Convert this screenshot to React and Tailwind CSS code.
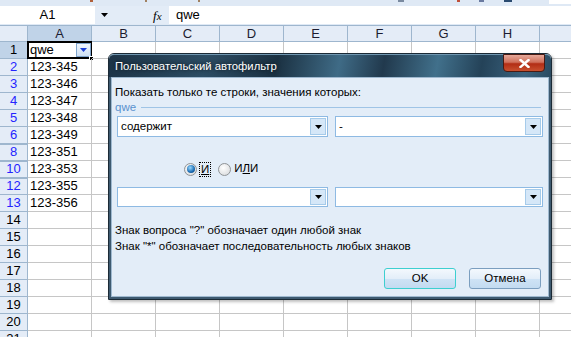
import React from 'react';

const COLS = ['A', 'B', 'C', 'D', 'E', 'F', 'G', 'H', 'I'];

const ROWS = [
    { n: 1, v: 'qwe' },
    { n: 2, v: '123-345', f: true },
    { n: 3, v: '123-346', f: true },
    { n: 4, v: '123-347', f: true },
    { n: 5, v: '123-348', f: true },
    { n: 6, v: '123-349', f: true },
    { n: 8, v: '123-351', f: true, gap: true },
    { n: 10, v: '123-353', f: true, gap: true },
    { n: 12, v: '123-355', f: true, gap: true },
    { n: 13, v: '123-356', f: true },
    { n: 14 }, { n: 15 }, { n: 16 }, { n: 17 }, { n: 18 }, { n: 19 }, { n: 20 }, { n: 21 },
];

const Arrow = ({ color = '#000' }) => (
    <svg width="7" height="4" viewBox="0 0 7 4">
        <path d="M0 0h7L3.5 4z" fill={color} />
    </svg>
);

const ComboBox = ({ value, width }) => (
    <div className={`${width} h-full bg-white border border-[#8ebae3] flex items-stretch`}>
        <span className="flex-1 pl-[3px] text-[11.5px] leading-[19px] text-black">{value}</span>
        <div className="w-[16px] m-[1px] bg-[#d5e7f8] border border-[#a6cbea] flex items-center justify-center">
            <Arrow />
        </div>
    </div>
);

const Radio = ({ checked }) => (
    <div className="w-[13px] h-[13px] rounded-full border border-[#8f9396] bg-[radial-gradient(circle_at_40%_35%,#ffffff,#d3d5d8)] flex items-center justify-center">
        {checked && (
            <div className="w-[8px] h-[8px] rounded-full bg-[radial-gradient(circle_at_40%_35%,#9adaff,#1a6bb3_60%,#0d3f6e)]" />
        )}
    </div>
);

const DlgButton = ({ children, focused }) => (
    <div className={`w-[72px] h-[21px] rounded-[3px] border ${focused ? 'border-[#3dcfd0]' : 'border-[#7b9ebf]'} bg-[linear-gradient(#f3f8fd_0%,#e3eef9_50%,#cfe3f5_51%,#c3dbf1_100%)] flex items-center justify-center text-[11.5px] text-black`}>
        {children}
    </div>
);

const App = () => {
    return (
        <div className="relative w-[571px] h-[337px] overflow-hidden bg-white font-['Liberation_Sans',Arial,sans-serif] text-black select-none">
            {/* верхняя полоска ленты */}
            <div className="relative h-[6px] bg-[#dfe9f5]">
                <span className="absolute left-[90px] top-0 w-[3px] h-[2px] bg-[#b0603a]" />
                <span className="absolute left-[145px] top-0 w-[2px] h-[2px] bg-[#a08060]" />
                <span className="absolute left-[198px] top-0 w-[2px] h-[2px] bg-[#a08060]" />
                <span className="absolute left-[398px] top-0 w-[6px] h-[2px] bg-[#7a8aa0]" />
                <span className="absolute left-[457px] top-0 w-[3px] h-[2px] bg-[#c0503a]" />
                <span className="absolute left-[479px] top-0 w-[5px] h-[2px] bg-[#6a7aa0]" />
                <span className="absolute left-[504px] top-0 w-[8px] h-[2px] bg-[#2a4a70]" />
                <span className="absolute left-[549px] top-0 w-[22px] h-[4px] bg-white" />
            </div>

            {/* строка формул */}
            <div className="flex h-[18px] text-[13px]">
                <div className="w-[95px] bg-white flex items-center justify-center">A1</div>
                <div className="w-[74px] bg-[#e3ecf7] flex items-center">
                    <div className="ml-[6px]"><Arrow /></div>
                    <span className="ml-[45px] italic font-['Liberation_Serif',serif] text-[13px] leading-none">f<span className="text-[11px]">x</span></span>
                </div>
                <div className="flex-1 bg-white flex items-center pl-[7px]">qwe</div>
            </div>
            <div className="h-[1px] bg-[#dfe9f5]" />

            {/* таблица */}
            <div className="flex h-[17px] border-t border-[#9eb6ce]">
                <div className="w-[28px] shrink-0 bg-[#e4ecf7] border-r border-b border-[#9eb6ce]" />
                {COLS.map((c) => (
                    <div
                        key={c}
                        className={`w-[64px] shrink-0 border-r border-b border-[#9eb6ce] flex items-center justify-center text-[13px] text-[#1c1c30] ${c === 'A' ? 'bg-[#c0d3e8]' : 'bg-[#e4ecf7]'}`}
                    >
                        {c !== 'I' && c}
                    </div>
                ))}
            </div>
            {ROWS.map((r) => (
                <div key={r.n} className="flex h-[17px]">
                    <div
                        className={`w-[28px] shrink-0 border-r border-b border-[#9eb6ce] flex items-center justify-center text-[13px] ${r.n === 1 ? 'bg-[#c0d3e8] text-black' : 'bg-[#e4ecf7]'} ${r.f ? 'text-[#2424ff]' : 'text-black'} ${r.gap ? 'shadow-[inset_0_1px_0_#9eb6ce]' : ''}`}
                    >
                        {r.n}
                    </div>
                    {COLS.map((c) => (
                        <div key={c} className="relative w-[64px] shrink-0 border-r border-b border-[#c6c6c6] text-[13px] leading-[16px] pl-[2px]">
                            {c === 'A' && r.v}
                            {c === 'A' && r.n === 1 && (
                                <>
                                    <div className="absolute -left-[1px] -top-[1px] w-[65px] h-[18px] border-2 border-black" />
                                    <div className="absolute right-[0px] top-[1px] w-[15px] h-[14px] border border-[#7fa4cc] bg-[linear-gradient(#f0f6fd,#cddff3)] flex items-center justify-center">
                                        <Arrow color="#1a3fd6" />
                                    </div>
                                    <div className="absolute -right-[3px] -bottom-[3px] w-[5px] h-[5px] bg-black border border-white" />
                                </>
                            )}
                        </div>
                    ))}
                </div>
            ))}

            {/* диалог пользовательского автофильтра */}
            <div className="absolute left-[108px] top-[53px] w-[444px] h-[247px] flex flex-col rounded-t-[6px] border border-[#1b2a36] shadow-[2px_2px_3px_rgba(0,0,0,0.25)]">
                <div className="relative h-[23px] shrink-0 rounded-t-[5px] border-t border-[#6f96b0] bg-[linear-gradient(100deg,#1d3447_0%,#2d4d64_22%,#1b3142_38%,#3f6b86_52%,#21394d_62%,#41708b_74%,#244258_84%,#3b6480_94%,#2a4a60_100%)] flex items-center pl-[6px]">
                    <span className="text-[11.3px] text-white [text-shadow:0_0_4px_rgba(0,0,0,0.8)]">Пользовательский автофильтр</span>
                    <div className="absolute right-[6px] -top-[1px] w-[42px] h-[18px] rounded-b-[4px] border border-[#4a1a12] bg-[linear-gradient(#e6a99a_0%,#d0705c_45%,#b22d15_55%,#c8502f_100%)] flex items-center justify-center">
                        <svg width="11" height="9" viewBox="0 0 11 9">
                            <path d="M1.5 1l8 7M9.5 1l-8 7" stroke="#fff" strokeWidth="2.4" strokeLinecap="square" />
                        </svg>
                    </div>
                </div>
                <div className="flex-1 bg-[#3e5a70] px-[2px] pb-[2px]">
                    <div className="h-full bg-[#e3edf8] border border-[#9fb9d0] flex flex-col px-[3px] text-[11.5px] text-black">
                        <div className="mt-[7px] h-[14px] leading-[14px]">Показать только те строки, значения которых:</div>
                        <div className="mt-[1px] h-[14px] flex items-center">
                            <span className="text-[#5a92cf] leading-[14px]">qwe</span>
                            <div className="flex-1 ml-[5px] mr-[4px] h-[1px] bg-[#9fc4e6]" />
                        </div>
                        <div className="mt-[2px] h-[21px] flex pl-[2px] gap-[7px]">
                            <ComboBox value="содержит" width="w-[211px]" />
                            <ComboBox value="-" width="w-[208px]" />
                        </div>
                        <div className="mt-[25px] h-[14px] flex items-center pl-[69px]">
                            <Radio checked />
                            <span className="ml-[3px] px-[1px] leading-[13px] outline-1 outline-dotted outline-black underline">И</span>
                            <div className="ml-[8px]"><Radio /></div>
                            <span className="ml-[3px]">И<span className="underline">Л</span>И</span>
                        </div>
                        <div className="mt-[11px] h-[20px] flex pl-[2px] gap-[7px]">
                            <ComboBox value="" width="w-[211px]" />
                            <ComboBox value="" width="w-[208px]" />
                        </div>
                        <div className="mt-[16px] h-[14px] leading-[14px]">Знак вопроса "?" обозначает один любой знак</div>
                        <div className="mt-[2px] h-[14px] leading-[14px]">Знак "*" обозначает последовательность любых знаков</div>
                        <div className="mt-[15px] flex justify-end gap-[13px] pr-[4px]">
                            <DlgButton focused>OK</DlgButton>
                            <DlgButton>Отмена</DlgButton>
                        </div>
                    </div>
                </div>
            </div>
        </div>
    );
};

export default App;
